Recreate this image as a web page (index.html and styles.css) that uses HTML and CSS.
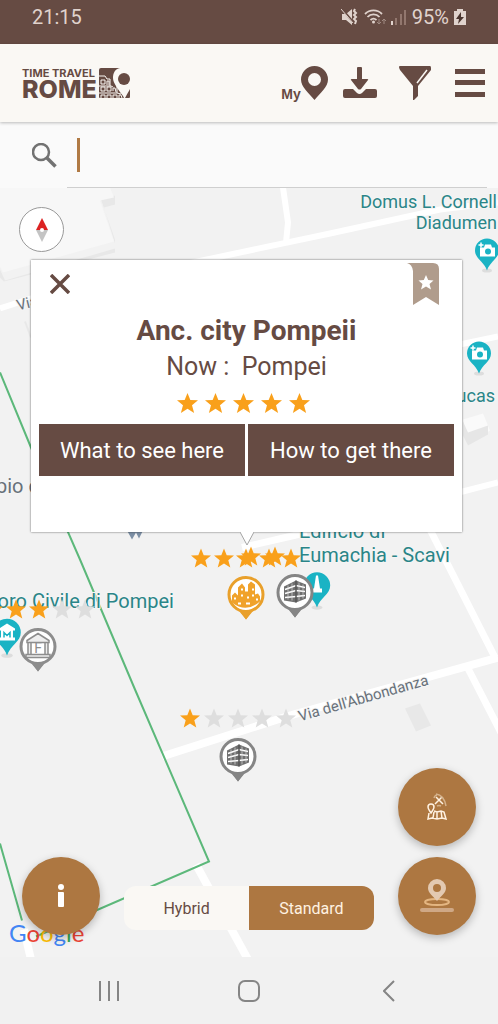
FILE: index.html
```
<!DOCTYPE html>
<html lang="en">

<head>
    <meta charset="UTF-8">
    <meta name="viewport" content="width=device-width, initial-scale=1.0">
    <title>Time Travel Rome</title>
    <link rel="stylesheet" href="styles.css">
</head>

<body>
    <div class="status-bar">
        <span>21:15</span>
        <div class="status-icons">
            <svg width="18" height="18" viewBox="0 0 18 18">
                <path d="M1 6h4l6-5v16l-6-5H1z" fill="#e0d3cd" />
                <path d="M1 1l12 14" stroke="#664b43" stroke-width="2" />
                <path d="M0 1l12 14" stroke="#e0d3cd" stroke-width="1" />
                <path d="M14 1l-1 2 2 2-2 2 2 2-2 2 2 2-1 3" fill="none" stroke="#e0d3cd" stroke-width="2" />
            </svg>
            <svg width="22" height="18" viewBox="0 0 22 18">
                <path d="M1 6a12 12 0 0 1 17 0M3.500 9a8 8 0 0 1 12 0M6.500 12a4.500 4.500 0 0 1 6 0" fill="none" stroke="#e0d3cd" stroke-width="1.800" />
                <circle cx="9.500" cy="14" r="1.500" fill="#e0d3cd" />
                <path d="M15 11v5m-2-2l2 2 2-2M20 16v-5m-2 2l2-2 2 2" fill="none" stroke="#a08b83" stroke-width="1" />
            </svg>
            <svg width="16" height="18" viewBox="0 0 16 18">
                <path d="M0 13h2v4H0z" fill="#e0d3cd" />
                <path d="M4 10h2v7H4zM9 6h2v11H9zM13 2h2v15h-2z" fill="#92776e" />
            </svg>
            <span class="battery-level">95%</span>
            <svg width="12" height="18" viewBox="0 0 12 18">
                <path d="M0 3h3V1h6v2h3v14H0z" fill="#e0d3cd" />
                <path d="M7 4L2 11h3l-1 5 6-7H7z" fill="#4a352f" />
            </svg>
        </div>
    </div>

    <header class="header">
        <a href="#" class="logo">
            <span class="logo-words">
                <span class="logo-small">TIME TRAVEL</span>
                <span class="logo-big">ROME</span>
            </span>
            <svg width="31" height="30" viewBox="0 0 31 30">
                <path d="M2 0h19c-5 1-7 5-7 10 0 5 5 11 10 18l1 2H1Q0 30 0 29V2Q0 0 2 0z" fill="#664b43" />
                <path d="M26 30c2-4 4-7 5-9v8q0 1-1 1z" fill="#664b43" />
                <circle cx="25" cy="11" r="6" fill="#664b43" />
                <g fill="none" stroke="#faf8f4" stroke-width="1">
                    <path d="M0 8h6l2 3h3M0 18h12l2 1M0 25h18l4 1M11 11v7M18 18v7" />
                    <path d="M2 16v-4h4v4zM8 17v-4h2v4M2 23v-4h4v4zM8 23v-4h4v4zM14 23v-3h2l1 4M2 30v-3h4v3M8 30v-3h4v3M14 30v-3h4v3M20 30v-3h2l1 3" />
                </g>
            </svg>
        </a>
        <nav class="header-actions">
            <button class="icon-button my-places" aria-label="My places">
                <span>My</span>
                <svg width="27" height="34" viewBox="0 0 27 34">
                    <path fill-rule="evenodd" d="M13.500 0A13.500 13.500 0 0 0 0 13.500C0 21 8 27 13.500 34 19 27 27 21 27 13.500A13.500 13.500 0 0 0 13.500 0zm0 7a6.500 6.500 0 1 1 0 13 6.500 6.500 0 0 1 0-13z" />
                </svg>
            </button>
            <button class="icon-button" aria-label="Download">
                <svg width="34" height="32" viewBox="0 0 34 32">
                    <path d="M14 1q0-1 1-1h3q1 0 1 1v11h5q2 0 1 1l-7 9q-1.500 1-3 0l-7-9q-1-1 1-1h5z" />
                    <path d="M2 22h8l4 4q2.500 2 5 0l4-4h9q2 0 2 2v5q0 2-2 2H2q-2 0-2-2v-5q0-2 2-2z" />
                </svg>
            </button>
            <button class="icon-button" aria-label="Filter">
                <svg width="32" height="34" viewBox="0 0 32 34">
                    <path d="M1 0h30q1 0 1 2v2L19 20v10l-4 4h-1V20L1 4Q-1 0 1 0z" />
                    <path d="M28 4L18 17" stroke="#faf8f4" stroke-width="1.500" />
                </svg>
            </button>
            <button class="icon-button" aria-label="Menu">
                <svg width="30" height="28" viewBox="0 0 30 28">
                    <path d="M0 0h30v5H0zM0 11h30v5H0zM0 23h30v5H0z" />
                </svg>
            </button>
        </nav>
    </header>

    <div class="search">
        <label for="search-input">
            <svg width="25" height="25" viewBox="0 0 25 25" role="img" aria-label="Search">
                <circle cx="9" cy="9" r="8" fill="none" stroke="#727272" stroke-width="2.500" />
                <path d="M15 15l8.500 8.500" stroke="#727272" stroke-width="3.500" />
            </svg>
        </label>
        <div class="search-field">
            <input type="text" id="search-input">
        </div>
    </div>

    <main class="map">
        <svg class="map-canvas" viewBox="0 188 498 770" preserveAspectRatio="xMidYMid slice">
            <defs>
                <path id="star" d="M0-10L2.700-3.300 10-3 4.300 1.700 6.300 9 0 5-6.300 9-4.300 1.700-10-3-2.700-3.300z" />
                <g id="teal-pin">
                    <ellipse cx="0" cy="20" rx="5" ry="2" fill="#ddd" />
                    <path d="M0-12A12 12 0 0 0-12 0C-12 8-3 11 0 20 3 11 12 8 12 0A12 12 0 0 0 0-12z" fill="#1ab3c4" />
                </g>
                <g id="camera-pin">
                    <use href="#teal-pin" />
                    <path d="M-7-3h4l1-3h6l1 3h3v9H-7z" fill="#fff" />
                    <circle cx="1" cy="1" r="3" fill="#1ab3c4" />
                    <path d="M-6-8v5M-8.500-5.500h5" stroke="#fff" stroke-width="1.500" />
                </g>
                <g id="site-pin">
                    <path d="M-8 14H8L0 25z" fill="currentColor" />
                    <circle r="17" fill="#fff" stroke="currentColor" stroke-width="3" />
                    <path d="M-9 14Q0 18 9 14L0 25z" fill="currentColor" />
                </g>
                <g id="building-pin" color="#858585">
                    <use href="#site-pin" />
                    <path d="M-11-6L1-12 11-8V6L1 10l-12-2z" fill="#6f6f6f" />
                    <path d="M-10-3L1-7l9 2M-10 1L1-2l9 1M-10 5L1 4l9-1" fill="none" stroke="#fff" stroke-width="1.500" />
                    <path d="M-7-7V7M-3-9V8M4-10V8M8-8V6" fill="none" stroke="#ddd" stroke-width=".7" />
                    <path d="M1-12v22" fill="none" stroke="#555" stroke-width="1.500" />
                </g>
            </defs>

            <!-- buildings -->
            <path d="M0 278v-8l5 11 110-32v-9l-14-40 14-4v9l-11 3 11 36v9L4 282z" fill="#e8e8e8" />
            <path d="M0 188h110l4 10-14 3 14 41L3 273l-3-6z" fill="#f7f7f7" />
            <path d="M463 420l20-6 7 17-22 15z" fill="#fafafa" />
            <path d="M463 422l5 11v13l-5-10zM468 433l20-7v9l-20 11z" fill="#e6e6e6" />
            <path d="M405 709l15-5 11 22-15 6z" fill="#e8e8e8" />
            <path d="M25 322l6 16" stroke="#e8e8e8" stroke-width="2" />

            <!-- roads -->
            <g fill="none" stroke="#fff" stroke-width="7">
                <path d="M150 272L330 234 440 210 498 203M283 188l5 35-2 20" stroke-width="6" />
                <path d="M0 309l34-11M455 346l43-9M455 494l43-11" stroke-width="6" />
                <path d="M242 548l65-15M430 530l65 128M467 667l36 70" />
                <path d="M162 757L290 716 498 658" stroke-width="8" />
                <path d="M196 865l52 95M24 930l7 30" stroke-width="8" />
            </g>

            <!-- site boundary -->
            <path d="M0 373L31 448 80 560 135 690 209 862 36 937M0 844l22 77" fill="none" stroke="#5cb87a" stroke-width="2" />

            <g class="place-label">
                <text x="497" y="208" text-anchor="end" class="small-place">Domus L. Cornell</text>
                <text x="497" y="229" text-anchor="end" class="small-place">Diadumen</text>
                <text x="495" y="402" text-anchor="end" class="small-place">Lucas</text>
                <text x="299" y="538">Edificio di</text>
                <text x="299" y="562">Eumachia - Scavi</text>
                <text x="174" y="608" text-anchor="end">oro Civile di Pompei</text>
            </g>
            <g class="road-label">
                <text x="0" y="0" transform="translate(18 311) rotate(-14)">Via</text>
                <text x="0" y="0" transform="translate(300 722) rotate(-16)">Via dell'Abbondanza</text>
                <text x="-4" y="493" class="area-label">pio di</text>
            </g>

            <!-- ratings above the sites -->
            <g fill="#f9a01b">
                <use href="#star" x="201" y="559" />
                <use href="#star" x="224" y="559" />
                <use href="#star" x="246" y="559" />
                <use href="#star" x="251" y="557" />
                <use href="#star" x="269" y="559" />
                <use href="#star" x="275" y="557" />
                <use href="#star" x="291" y="559" />
                <use href="#star" x="-7" y="610" />
                <use href="#star" x="16" y="610" />
                <use href="#star" x="39" y="610" />
                <use href="#star" x="190" y="719" />
            </g>
            <g fill="#dedede">
                <use href="#star" x="62" y="610" />
                <use href="#star" x="85" y="610" />
                <use href="#star" x="214" y="719" />
                <use href="#star" x="238" y="719" />
                <use href="#star" x="262" y="719" />
                <use href="#star" x="286" y="719" />
            </g>

            <use href="#camera-pin" x="487" y="251" />
            <use href="#camera-pin" x="479" y="354" />
            <path d="M127 531l5 9 4-7 3 6 4-8z" fill="#7c8fa5" />

            <g transform="translate(317 586)">
                <use href="#teal-pin" transform="scale(1.100)" />
                <path d="M-1-10h2l2 13h2v4H-6V3h3z" fill="#fff" />
            </g>
            <use href="#building-pin" x="295" y="593" />
            <use href="#building-pin" x="238" y="757" />

            <g transform="translate(246 595)" color="#e9a02b">
                <use href="#site-pin" />
                <path d="M-14 8V1l3-3 3 3v-8l4-4 3 4v4h3v-7l3-3 4 3v10l3-1 2 3v5Q0 19-14 8z" fill="#f0a22b" />
                <path d="M-12 4h2M-5-5h2M-5 1h2M1 3h2M6-5h2M6 1h2M10 5h2M-8 9h3M0 9h4" stroke="#fff" stroke-width="2" />
            </g>

            <g transform="translate(7 633)">
                <use href="#teal-pin" transform="scale(1.150)" />
                <path d="M-8-4L0-9l8 5v2H-8zM-8 5H8v3H-8zM-6-2H6v7H-6z" fill="#fff" />
                <path d="M-3 5v-5l3 3 3-3v5" fill="none" stroke="#1ab3c4" stroke-width="1.500" />
            </g>

            <g transform="translate(38 647)" color="#8d8d8d">
                <use href="#site-pin" />
                <path d="M-11-6L0-13l11 7v2h-22zM-10-4h3V8h-3zM7-4h3V8H7zM-12 8h24v3h-24z" fill="#eee" stroke="#8d8d8d" stroke-width="1.500" />
                <text x="0" y="6" class="pin-letter" text-anchor="middle">F</text>
            </g>

            <text x="9" y="942" class="google"><tspan fill="#4285f4">G</tspan><tspan fill="#ea4335">o</tspan><tspan fill="#fbbc05">o</tspan><tspan fill="#4285f4">g</tspan><tspan fill="#34a853">l</tspan><tspan fill="#ea4335">e</tspan></text>
        </svg>

        <button class="compass" aria-label="Compass">
            <svg width="12" height="24" viewBox="0 0 12 24">
                <path d="M6 0l6 12H0z" fill="#dc2323" />
                <path d="M0 12h12L6 24z" fill="#c4c4c4" />
                <circle cx="6" cy="12" r="2" fill="#fff" />
            </svg>
        </button>

        <section class="popup">
            <div class="popup-top">
                <button class="close" aria-label="Close">
                    <svg width="20" height="20" viewBox="0 0 20 20">
                        <path d="M1 1l18 18M19 1L1 19" stroke="#664b43" stroke-width="3.500" />
                    </svg>
                </button>
                <button class="bookmark" aria-label="Bookmark">
                    <svg width="32" height="42" viewBox="0 0 32 42">
                        <path d="M0 0h26q6 0 6 6v36l-13-8-13 8V8Q5 1 0 0z" fill="#b09c8c" />
                        <path d="M19 12l2.200 5 5.300.500-4 3.500 1.500 5.500-5-3-5 3 1.500-5.500-4-3.500 5.300-.5z" fill="#fff" />
                    </svg>
                </button>
            </div>
            <h1>Anc. city Pompeii</h1>
            <p class="now">Now :&nbsp; Pompei</p>
            <div class="rating" role="img" aria-label="5 stars">
                <svg viewBox="-10 -10 20 20"><use href="#star" /></svg>
                <svg viewBox="-10 -10 20 20"><use href="#star" /></svg>
                <svg viewBox="-10 -10 20 20"><use href="#star" /></svg>
                <svg viewBox="-10 -10 20 20"><use href="#star" /></svg>
                <svg viewBox="-10 -10 20 20"><use href="#star" /></svg>
            </div>
            <div class="popup-buttons">
                <button>What to see here</button>
                <button>How to get there</button>
            </div>
            <svg class="popup-tail" width="14" height="14" viewBox="0 0 14 14">
                <path d="M0 0l7 13 7-13" fill="#fff" stroke="#a5a5a5" />
            </svg>
        </section>

        <div class="map-controls">
            <button class="fab" aria-label="Info">
                <svg width="8" height="24" viewBox="0 0 8 24">
                    <circle cx="4" cy="3" r="3" fill="#fff" />
                    <path d="M1 8h5q1 0 1 1v13q0 1-1 1H2q-1 0-1-1z" fill="#fff" />
                </svg>
            </button>
            <div class="map-type">
                <button>Hybrid</button>
                <button class="active">Standard</button>
            </div>
            <div class="fab-column">
                <button class="fab" aria-label="Offline map">
                    <svg width="20" height="28" viewBox="0 0 20 28">
                        <g fill="none" stroke="#fff2e2" stroke-width="1.500">
                            <path d="M4 20c-2-3-3-4-3-6a3 3 0 0 1 6 0c0 2-1 3-3 6z" />
                            <path d="M2 20l-1 6 4-1 5 1 5-1 4 1-2-7-3-1-4 1-3-1M7 19l-1 6M10 19v7M14 18l1 7" />
                            <path d="M9 4l7 7M15 4l-7 7" />
                        </g>
                        <path d="M9 1q8 1 10 12M7 5q1-3 3-3M10 13q2-1 4 0" fill="none" stroke="#d5b38d" stroke-width="1.500" />
                    </svg>
                </button>
                <button class="fab" aria-label="My location">
                    <svg width="34" height="34" viewBox="0 0 34 34">
                        <ellipse cx="17" cy="23" rx="12" ry="3" fill="none" stroke="#e4b682" stroke-width="2" />
                        <path fill-rule="evenodd" d="M17 0a9 9 0 0 0-9 9c0 5 5 8 9 13 4-5 9-8 9-13a9 9 0 0 0-9-9zm0 5a4 4 0 1 1 0 8 4 4 0 0 1 0-8z" fill="#e3c9b1" />
                        <path d="M2 31h30" stroke="#cfa886" stroke-width="4" stroke-linecap="round" />
                    </svg>
                </button>
            </div>
        </div>
    </main>

    <nav class="system-nav">
        <button aria-label="Recent apps">
            <svg width="22" height="22" viewBox="0 0 22 22">
                <path d="M2 1v20M11 1v20M20 1v20" stroke="#858585" stroke-width="2" />
            </svg>
        </button>
        <button aria-label="Home">
            <svg width="22" height="22" viewBox="0 0 22 22">
                <rect x="1" y="1" width="20" height="20" rx="6" fill="none" stroke="#858585" stroke-width="2" />
            </svg>
        </button>
        <button aria-label="Back">
            <svg width="12" height="22" viewBox="0 0 12 22">
                <path d="M11 1L1 11l10 10" fill="none" stroke="#858585" stroke-width="2" />
            </svg>
        </button>
    </nav>
</body>

</html>
```

FILE: styles.css
```
* {
    box-sizing: border-box;
}

body {
    display: flex;
    flex-direction: column;
    min-height: 100vh;
    margin: 0;
    font-family: Roboto, "Liberation Sans", sans-serif;
    color: #664b43;
    background-color: #f2f2f2;
}

button {
    display: flex;
    align-items: center;
    justify-content: center;
    padding: 0;
    font-family: inherit;
    color: inherit;
    background: none;
    border: none;
    cursor: pointer;
}

svg {
    display: block;
    flex-shrink: 0;
}

.status-bar {
    display: flex;
    justify-content: space-between;
    height: 44px;
    padding: 4px 32px 0;
    font-size: 20px;
    line-height: 26px;
    color: #e0d3cd;
    background-color: #664b43;
}

.status-icons {
    display: flex;
    align-items: center;
    height: 26px;
    gap: 5px;
}

.header {
    position: relative;
    display: flex;
    align-items: center;
    justify-content: space-between;
    height: 78px;
    padding-left: 22px;
    padding-right: 1px;
    background-color: #faf8f4;
    box-shadow: 0 1px 3px rgba(0, 0, 0, 0.25);
}

.logo {
    display: flex;
    align-items: center;
    gap: 2px;
    color: #664b43;
    text-decoration: none;
    font-family: Inter, sans-serif;
}

.logo-words {
    display: flex;
    flex-direction: column;
}

.logo-small {
    font-size: 11px;
    font-weight: 700;
    line-height: 12px;
}

.logo-big {
    font-size: 25px;
    font-weight: 800;
    line-height: 20px;
}

.header-actions {
    display: flex;
}

.icon-button {
    width: 55px;
    height: 55px;
    fill: #664b43;
}

.my-places span {
    align-self: flex-end;
    padding-bottom: 9px;
    font: bold 14px "Liberation Sans", sans-serif;
}

.search {
    display: flex;
    align-items: center;
    height: 66px;
    padding: 0 11px 0 32px;
    gap: 10px;
    background-color: #fafafa;
}

.search-field {
    display: flex;
    align-items: center;
    flex: 1;
    height: 66px;
    padding-left: 10px;
    border-bottom: 1px solid #cfcfcf;
}

.search input {
    width: 100%;
    height: 34px;
    padding: 0 8px;
    font-size: 20px;
    color: #664b43;
    background: none;
    border: none;
    border-left: 3px solid #b07a45;
    outline: none;
}

.map {
    position: relative;
    display: flex;
    flex-direction: column;
    flex: 1;
    min-height: 600px;
    overflow: hidden;
}

.map-canvas {
    position: absolute;
    width: 100%;
    height: 100%;
}

.place-label {
    font-size: 20px;
    fill: #2a8588;
    stroke: #f5f5f5;
    stroke-width: 2px;
    paint-order: stroke;
}

.small-place {
    font-size: 18px;
}

.road-label {
    font-size: 15px;
    fill: #68717a;
    stroke: #f5f5f5;
    stroke-width: 2px;
    paint-order: stroke;
}

.area-label {
    font-size: 20px;
}

.pin-letter {
    font-size: 14px;
    fill: #8d8d8d;
}

.google {
    font-family: Lato, sans-serif;
    font-size: 24px;
}

.compass {
    position: absolute;
    top: 19px;
    left: 19px;
    width: 45px;
    height: 45px;
    background-color: #fff;
    border: 1px solid #999;
    border-radius: 50%;
}

.popup {
    position: absolute;
    top: 72px;
    left: 31px;
    right: 36px;
    padding: 3px 8px 56px;
    text-align: center;
    background-color: #fff;
    box-shadow: 0 0 2px rgba(0, 0, 0, 0.6);
}

.popup-top {
    display: flex;
    justify-content: space-between;
    height: 50px;
    padding: 0 15px 0 11px;
}

.close {
    height: 42px;
}

.bookmark {
    height: 42px;
}

.popup h1 {
    margin: 0;
    font-size: 28px;
    line-height: 36px;
}

.now {
    margin: 0;
    font-size: 25px;
    line-height: 36px;
}

.rating {
    display: flex;
    justify-content: center;
    height: 39px;
    padding-top: 8px;
    padding-right: 7px;
    gap: 7px;
}

.rating svg {
    width: 21px;
    height: 21px;
    fill: #f9a01b;
}

.popup-buttons {
    display: flex;
    gap: 3px;
}

.popup-buttons button {
    flex: 1;
    height: 52px;
    font-size: 22px;
    color: #fff;
    background-color: #664b43;
}

.popup-tail {
    position: absolute;
    top: 100%;
    left: 50%;
    margin-left: -7px;
}

.map-controls {
    position: relative;
    display: flex;
    align-items: flex-end;
    justify-content: space-between;
    margin-top: auto;
    padding: 0 22px 22px;
}

.fab {
    width: 78px;
    height: 78px;
    background-color: #ad7741;
    border-radius: 50%;
    box-shadow: 0 3px 8px rgba(0, 0, 0, 0.25);
}

.fab-column {
    display: flex;
    flex-direction: column;
    gap: 11px;
}

.map-type {
    display: flex;
    width: 55%;
    height: 44px;
    margin-bottom: 5px;
    border-radius: 12px;
    overflow: hidden;
}

.map-type button {
    flex: 1;
    font-size: 16px;
    background-color: #faf8f4;
}

.map-type .active {
    color: #fff2e2;
    background-color: #ad7741;
}

.system-nav {
    display: flex;
    height: 67px;
    padding: 0 39px;
    background-color: #f1f1f1;
}

.system-nav button {
    flex: 1;
}
```
